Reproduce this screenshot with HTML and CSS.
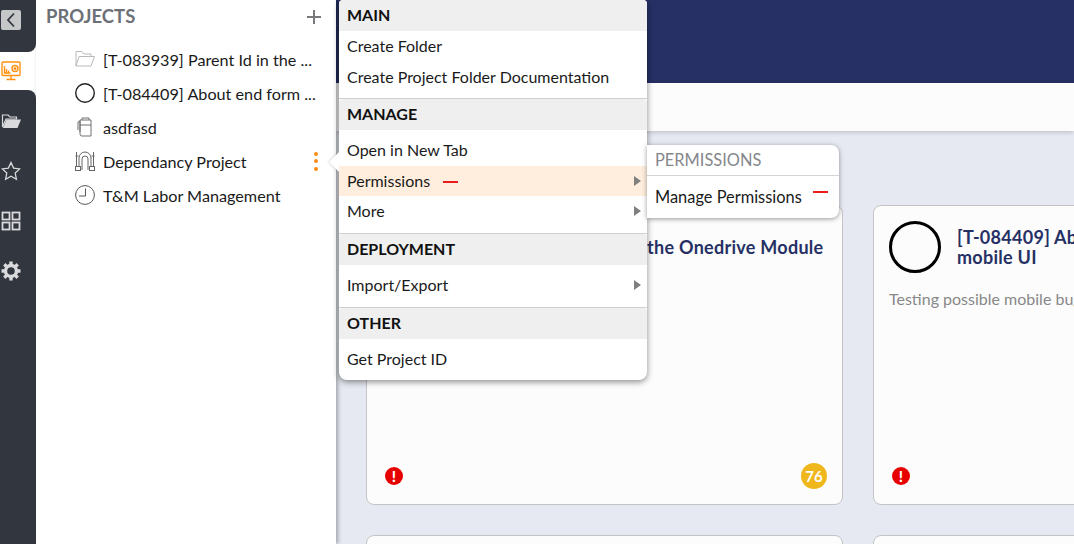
FILE: index.html
```html
<!DOCTYPE html>
<html lang="en">
<head>
<meta charset="utf-8">
<title>Projects</title>
<link rel="stylesheet" href="styles.css">
</head>
<body>
<div class="app">
  <nav class="rail">
    <div class="rail-top">
      <span class="back"><svg width="20" height="20" viewBox="0 0 20 20"><path d="M13 3.500 7 10l6 6.500" fill="none" stroke="#32363e" stroke-width="1.800"/></svg></span>
    </div>
    <div class="rail-active">
      <svg width="20" height="20" viewBox="0 0 20 20" fill="none" stroke="#ff9211" stroke-width="1.400"><rect x="1" y="1" width="18" height="13.500" rx="1"/><path d="M10 14.500V18M5.500 18.500h9M3.500 5v7h6M5.500 12V8M7.500 12V9.500"/><circle cx="14" cy="7.500" r="3"/><path d="M12.500 7.500h3M14 6v3"/></svg>
    </div>
    <div class="rail-rest">
      <svg class="rail-icon" width="20" height="20" viewBox="0 0 20 20"><path d="M1.500 16V4h5.500l2 2h6.500v2H5L1.500 16Z" fill="none" stroke="#d9dadc" stroke-width="1.200"/><path d="M5.500 8.500H20L16.500 17H1.800Z" fill="#d9dadc"/></svg>
      <svg class="rail-icon" width="20" height="20" viewBox="0 0 20 20"><path d="m10 1.500 2.600 5.600 6.100.8-4.500 4.200 1.200 6.100-5.400-3-5.400 3 1.200-6.100L1.300 7.900l6.100-.8Z" fill="none" stroke="#d9dadc" stroke-width="1.300"/></svg>
      <svg class="rail-icon" width="20" height="20" viewBox="0 0 20 20" fill="none" stroke="#d9dadc" stroke-width="1.800"><rect x="1.500" y="1.500" width="7" height="7"/><rect x="11.500" y="1.500" width="7" height="7"/><rect x="1.500" y="11.500" width="7" height="7"/><rect x="11.500" y="11.500" width="7" height="7"/></svg>
      <svg class="rail-icon" width="20" height="20" viewBox="0 0 20 20"><circle cx="10" cy="10" r="5.500" fill="none" stroke="#d9dadc" stroke-width="3.400"/><path d="M10 .5v4M10 15.500v4M.5 10h4M15.500 10h4M3.300 3.300l2.800 2.800M13.900 13.900l2.800 2.800M3.300 16.700l2.800-2.800M13.900 6.100l2.800-2.800" stroke="#d9dadc" stroke-width="3.400"/></svg>
    </div>
  </nav>

  <aside class="sidebar">
    <div class="side-head">
      <h2 class="side-title">PROJECTS</h2>
      <svg width="16" height="16" viewBox="0 0 16 16"><path d="M8 1v14M1 8h14" stroke="#77797d" stroke-width="2"/></svg>
    </div>
    <ul class="tree">
      <li class="tree-row">
        <svg width="20" height="20" viewBox="0 0 20 20" fill="none" stroke="#b9b9b9"><path d="M1 17V2.500h6l2 2.500h7v2.500"/><path d="M1 17 4 7.500h15.500L16 17Z"/></svg>
        <span class="tree-label">[T-083939] Parent Id in the ...</span>
      </li>
      <li class="tree-row">
        <svg width="20" height="20" viewBox="0 0 20 20" fill="none" stroke="#222" stroke-width="1.400"><circle cx="10" cy="10" r="9.300"/></svg>
        <span class="tree-label">[T-084409] About end form ...</span>
      </li>
      <li class="tree-row">
        <svg width="20" height="20" viewBox="0 0 20 20" fill="none" stroke="#707070"><path d="M7 3V1h7v2"/><path d="M5 3h11v16H7a2 2 0 0 1-2-2Z"/><path d="M5 8h11M5 15V4L3 5v8"/></svg>
        <span class="tree-label">asdfasd</span>
      </li>
      <li class="tree-row">
        <svg width="20" height="20" viewBox="0 0 20 20" fill="none" stroke="#666"><path d="M1.500 16V1M18.500 16V1M.5 5h3M16.500 5h3"/><rect x=".5" y="15.500" width="5" height="4"/><rect x="14.500" y="15.500" width="5" height="4"/><path d="M4 15.500V7a6 6 0 0 1 12 0v8.500M7 19V8a3 3 0 0 1 6 0v11"/></svg>
        <span class="tree-label">Dependancy Project</span>
        <span class="kebab"><i></i><i></i><i></i></span>
      </li>
      <li class="tree-row">
        <svg width="20" height="20" viewBox="0 0 20 20" fill="none" stroke="#555"><circle cx="10" cy="10" r="9.400"/><path d="M10.500 3.500V11H4"/></svg>
        <span class="tree-label">T&amp;M Labor Management</span>
      </li>
    </ul>
  </aside>

  <main class="main">
    <header class="topbar"></header>
    <div class="subbar"></div>
    <section class="cards">
      <article class="card">
        <div class="card-head">
          <span class="card-ring"></span>
          <h3 class="card-title">[T-083939] Parent Id in the Onedrive Module</h3>
        </div>
        <div class="card-foot">
          <span class="err">!</span>
          <span class="count">76</span>
        </div>
      </article>
      <article class="card">
        <div class="card-head">
          <span class="card-ring"></span>
          <h3 class="card-title">[T-084409] About end form in<br>mobile UI</h3>
        </div>
        <p class="card-desc">Testing possible mobile bugs</p>
        <div class="card-foot">
          <span class="err">!</span>
        </div>
      </article>
      <article class="card"></article>
      <article class="card"></article>
    </section>
  </main>
</div>

<div class="menu">
  <div class="menu-head">MAIN</div>
  <div class="menu-group">
    <div class="menu-item">Create Folder</div>
    <div class="menu-item">Create Project Folder Documentation</div>
  </div>
  <div class="menu-head">MANAGE</div>
  <div class="menu-group is-padded">
    <div class="menu-item">Open in New Tab</div>
    <div class="menu-item is-active">Permissions <span class="dash"></span><span class="caret"></span></div>
    <div class="menu-item">More<span class="caret"></span></div>
  </div>
  <div class="menu-head">DEPLOYMENT</div>
  <div class="menu-group is-padded">
    <div class="menu-item">Import/Export<span class="caret"></span></div>
  </div>
  <div class="menu-head">OTHER</div>
  <div class="menu-group is-padded is-last">
    <div class="menu-item">Get Project ID</div>
  </div>
</div>

<div class="submenu">
  <div class="sub-head">PERMISSIONS</div>
  <div class="sub-item">Manage Permissions<span class="dash sub-dash"></span></div>
</div>
</body>
</html>
```
FILE: styles.css
```css
* { box-sizing: border-box; }
html, body { margin: 0; height: 100%; overflow: hidden; }
body { font-family: "Lato", "Noto Sans", sans-serif; font-size: 16px; color: #1a1a1a; background: #e6e9f1; }
.app { display: flex; height: 544px; width: 1074px; overflow: hidden; }

.rail { flex: 0 0 36px; display: flex; flex-direction: column; background: #fff; }
.rail-top { height: 52px; background: #32363e; border-bottom-right-radius: 8px; padding: 10px 1px; }
.back { display: flex; align-items: center; justify-content: center; width: 20px; height: 20px; background: #c6c7c9; border-radius: 2px; }
.rail-active { height: 38px; display: flex; align-items: center; padding-left: 1px; }
.rail-rest { flex: 1; background: #32363e; border-top-right-radius: 8px; display: flex; flex-direction: column; gap: 30px; padding: 21px 0 0 1px; }
.rail-icon { display: block; }

.sidebar { flex: 0 0 300px; background: #fff; box-shadow: 2px 0 4px rgba(0,0,0,.3); position: relative; z-index: 2; padding: 5px 13px 0 10px; }
.side-head { display: flex; justify-content: space-between; align-items: center; height: 24px; margin-bottom: 14px; padding-right: 1px; }
.side-title { margin: -1px 0 1px; font-size: 18.500px; font-weight: 700; color: #6c7077; }
.tree { list-style: none; margin: -1px 0 0; padding: 0 0 0 29px; }
.tree-row { display: flex; align-items: center; gap: 8px; height: 34px; font-size: 16.200px; white-space: nowrap; }
.tree-label { flex: 1; }
.kebab { display: flex; flex-direction: column; gap: 3.500px; margin-right: 5px; }
.kebab i { display: block; width: 4px; height: 4px; border-radius: 50%; background: #ff8c14; }

.main { flex: 1; min-width: 0; display: flex; flex-direction: column; }
.topbar { height: 83px; background: #263064; flex: none; }
.subbar { height: 48px; background: #fcfcfc; flex: none; box-shadow: 0 1px 5px rgba(0,0,0,.2); }
.cards { display: grid; grid-template-columns: 477px 477px; grid-auto-rows: 300px; gap: 30px; padding: 74px 0 0 30px; }
.card { background: #fcfcfc; border: 1px solid #c4c4c6; border-radius: 8px; padding: 15px 15px 14px; display: flex; flex-direction: column; }
.card-head { display: flex; align-items: center; gap: 16px; }
.card-ring { flex: none; width: 52px; height: 52px; border: 3px solid #000; border-radius: 50%; }
.card-title { margin: 0; font-size: 18px; line-height: 20px; font-weight: 700; letter-spacing: .27px; color: #263064; white-space: nowrap; }
.card-desc { margin: 16px 0 0; font-size: 16px; line-height: 20px; color: #888; white-space: nowrap; }
.card-foot { margin-top: auto; display: flex; justify-content: space-between; align-items: center; height: 28px; padding: 0 0 0 3px; }
.err { width: 18px; height: 18px; border-radius: 50%; background: #e60000; color: #fff; font-size: 15px; line-height: 18px; font-weight: 900; text-align: center; }
.count { width: 26px; height: 26px; border-radius: 50%; background: #f0b71c; color: #fff; font-size: 15px; line-height: 26px; font-weight: 700; text-align: center; }

.menu { position: absolute; left: 339px; top: 0; width: 308px; background: #fff; border-radius: 4px 4px 8px 8px; box-shadow: 0 2px 6px rgba(0,0,0,.45); z-index: 5; font-size: 16px; }
.menu::before { content: ""; position: absolute; left: -10px; top: 152px; border: 10px solid transparent; border-left: 0; border-right-color: #fff; filter: drop-shadow(-1px 0 1px rgba(0,0,0,.15)); }
.menu-head { height: 31px; line-height: 30px; padding-left: 8px; background: #efefef; font-weight: 700; color: #111; border-radius: 4px 4px 0 0; }
.menu-group { padding-bottom: 6px; border-bottom: 1px solid #cfcfcf; }
.menu-group.is-padded { padding-top: 5px; padding-bottom: 6.500px; }
.menu-group.is-last { border-bottom: 0; padding-bottom: 5.500px; }
.menu-item { position: relative; height: 30.500px; line-height: 29px; padding-left: 8px; color: #1a1a1a; }
.is-active { background: #ffeedd; }
.dash { display: inline-block; width: 15px; height: 2px; background: #e81c1c; vertical-align: middle; margin-left: 9px; }
.caret { position: absolute; right: 6px; top: 10px; border: 5px solid transparent; border-right: 0; border-left: 7px solid #808080; }

.submenu { position: absolute; left: 647px; top: 145px; width: 192px; height: 73px; background: #fff; border-radius: 0 8px 8px 0; box-shadow: 0 1px 5px rgba(0,0,0,.4); z-index: 6; font-size: 16.400px; }
.sub-head { height: 31px; line-height: 29px; padding-left: 8px; color: #85878c; border-bottom: 1px solid #d4d4d4; }
.sub-item { position: relative; height: 42px; line-height: 41px; padding-left: 8px; }
.sub-dash { position: absolute; left: 166px; top: 15px; margin: 0; }
```
